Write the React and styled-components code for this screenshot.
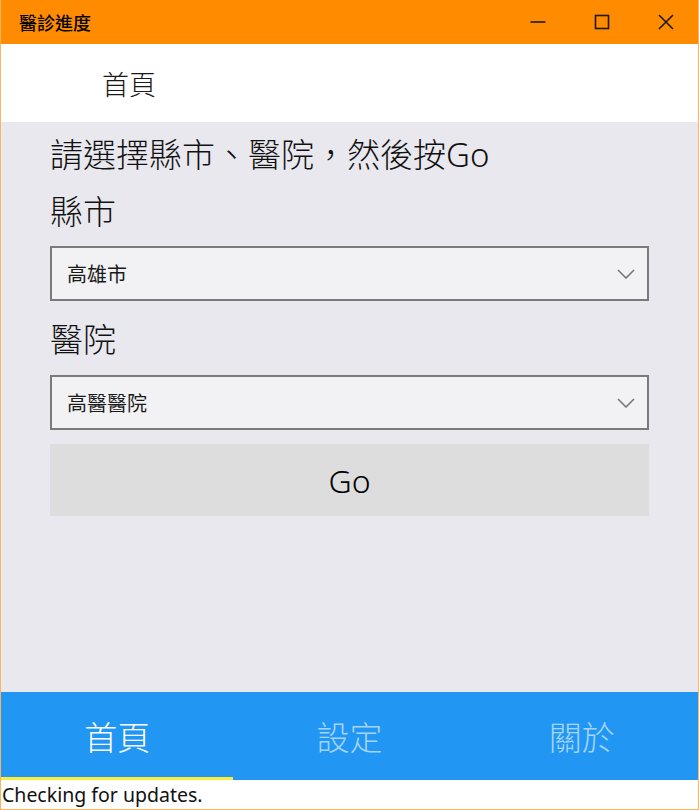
import React from 'react';
import styled, { createGlobalStyle } from 'styled-components';

const GlobalStyle = createGlobalStyle`
  html, body {
    margin: 0;
    padding: 0;
    background: #ffffff;
  }
  body {
    font-family: 'Noto Sans', 'Noto Sans CJK TC', sans-serif;
  }
`;

// Outer window frame
const Window = styled.div`
  width: 699px;
  height: 810px;
  box-sizing: border-box;
  border: 1px solid #fdb45c;
  border-top: none;
  display: flex;
  flex-direction: column;
  background: #ffffff;
`;

const TitleBar = styled.div`
  height: 44px;
  flex-shrink: 0;
  background: #ff8c00;
  display: flex;
  align-items: center;
`;

const TitleText = styled.span`
  padding-left: 18px;
  font-size: 18px;
  color: #000000;
  font-weight: 500;
`;

const Controls = styled.div`
  margin-left: auto;
  display: flex;
  height: 100%;
`;

const ControlButton = styled.div`
  width: 64px;
  height: 100%;
  display: flex;
  align-items: center;
  justify-content: center;
`;

const Header = styled.div`
  height: 78px;
  flex-shrink: 0;
  background: #ffffff;
  display: flex;
  align-items: center;
  padding-left: 101px;
`;

const HeaderTitle = styled.span`
  font-size: 27px;
  font-weight: 300;
  color: #1a1a1a;
`;

const Body = styled.div`
  flex: 1;
  background: #e9e8ee;
  padding: 13px 49px 0;
  display: flex;
  flex-direction: column;
`;

const Heading = styled.h1`
  margin: 0;
  font-size: 33px;
  font-weight: 300;
  line-height: 40px;
  color: #111111;
`;

const FieldLabel = styled.div`
  margin-top: ${(p) => p.$top}px;
  font-size: 33px;
  font-weight: 300;
  line-height: 40px;
  color: #111111;
`;

const Combo = styled.div`
  margin-top: ${(p) => p.$top}px;
  height: 55px;
  box-sizing: border-box;
  border: 2px solid #7a7a7a;
  background: #f2f2f4;
  display: flex;
  align-items: center;
  padding: 0 12px 0 15px;
`;

const ComboText = styled.span`
  flex: 1;
  font-size: 20px;
  color: #1a1a1a;
`;

const GoButton = styled.div`
  margin-top: 14px;
  height: 72px;
  background: #dddddd;
  display: flex;
  align-items: center;
  justify-content: center;
  font-size: 32px;
  font-weight: 300;
  color: #000000;
`;

const NavBar = styled.div`
  height: 88px;
  flex-shrink: 0;
  background: #2196f3;
  display: grid;
  grid-template-columns: repeat(3, 1fr);
`;

const Tab = styled.div`
  display: flex;
  align-items: center;
  justify-content: center;
  box-sizing: border-box;
  padding-top: 3px;
  border-bottom: 3px solid ${(p) => (p.$active ? '#ffeb3b' : 'transparent')};
  font-size: 33px;
  font-weight: 300;
  color: ${(p) => (p.$active ? '#ffffff' : 'rgba(255, 255, 255, 0.6)')};
`;

const StatusBar = styled.div`
  height: 29px;
  flex-shrink: 0;
  background: #ffffff;
  font-size: 19.5px;
  line-height: 29px;
  padding-left: 1px;
  color: #111111;
`;

const Chevron = () => (
  <svg width="18" height="10" viewBox="0 0 18 10">
    <path d="M1 1 L9 9 L17 1" fill="none" stroke="#777777" strokeWidth="1.6" />
  </svg>
);

const MinimizeIcon = () => (
  <svg width="16" height="16" viewBox="0 0 16 16">
    <path d="M0.5 8 H15.5" stroke="#1a1a1a" strokeWidth="1.6" />
  </svg>
);

const MaximizeIcon = () => (
  <svg width="16" height="16" viewBox="0 0 16 16">
    <rect x="1.5" y="1.5" width="13" height="13" fill="none" stroke="#1a1a1a" strokeWidth="1.6" />
  </svg>
);

const CloseIcon = () => (
  <svg width="16" height="16" viewBox="0 0 16 16">
    <path d="M1 1 L15 15 M15 1 L1 15" stroke="#1a1a1a" strokeWidth="1.6" />
  </svg>
);

const tabs = ['首頁', '設定', '關於'];

const App = () => {
  return (
    <>
      <GlobalStyle />
      <Window>
        <TitleBar>
          <TitleText>醫診進度</TitleText>
          <Controls>
            <ControlButton><MinimizeIcon /></ControlButton>
            <ControlButton><MaximizeIcon /></ControlButton>
            <ControlButton><CloseIcon /></ControlButton>
          </Controls>
        </TitleBar>
        <Header>
          <HeaderTitle>首頁</HeaderTitle>
        </Header>
        <Body>
          <Heading>請選擇縣市、醫院，然後按Go</Heading>
          <FieldLabel $top={17}>縣市</FieldLabel>
          <Combo $top={14}>
            <ComboText>高雄市</ComboText>
            <Chevron />
          </Combo>
          <FieldLabel $top={19}>醫院</FieldLabel>
          <Combo $top={15}>
            <ComboText>高醫醫院</ComboText>
            <Chevron />
          </Combo>
          <GoButton>Go</GoButton>
        </Body>
        <NavBar>
          {tabs.map((t, i) => (
            <Tab key={t} $active={i === 0}>{t}</Tab>
          ))}
        </NavBar>
        <StatusBar>Checking for updates.</StatusBar>
      </Window>
    </>
  );
};

export default App;
